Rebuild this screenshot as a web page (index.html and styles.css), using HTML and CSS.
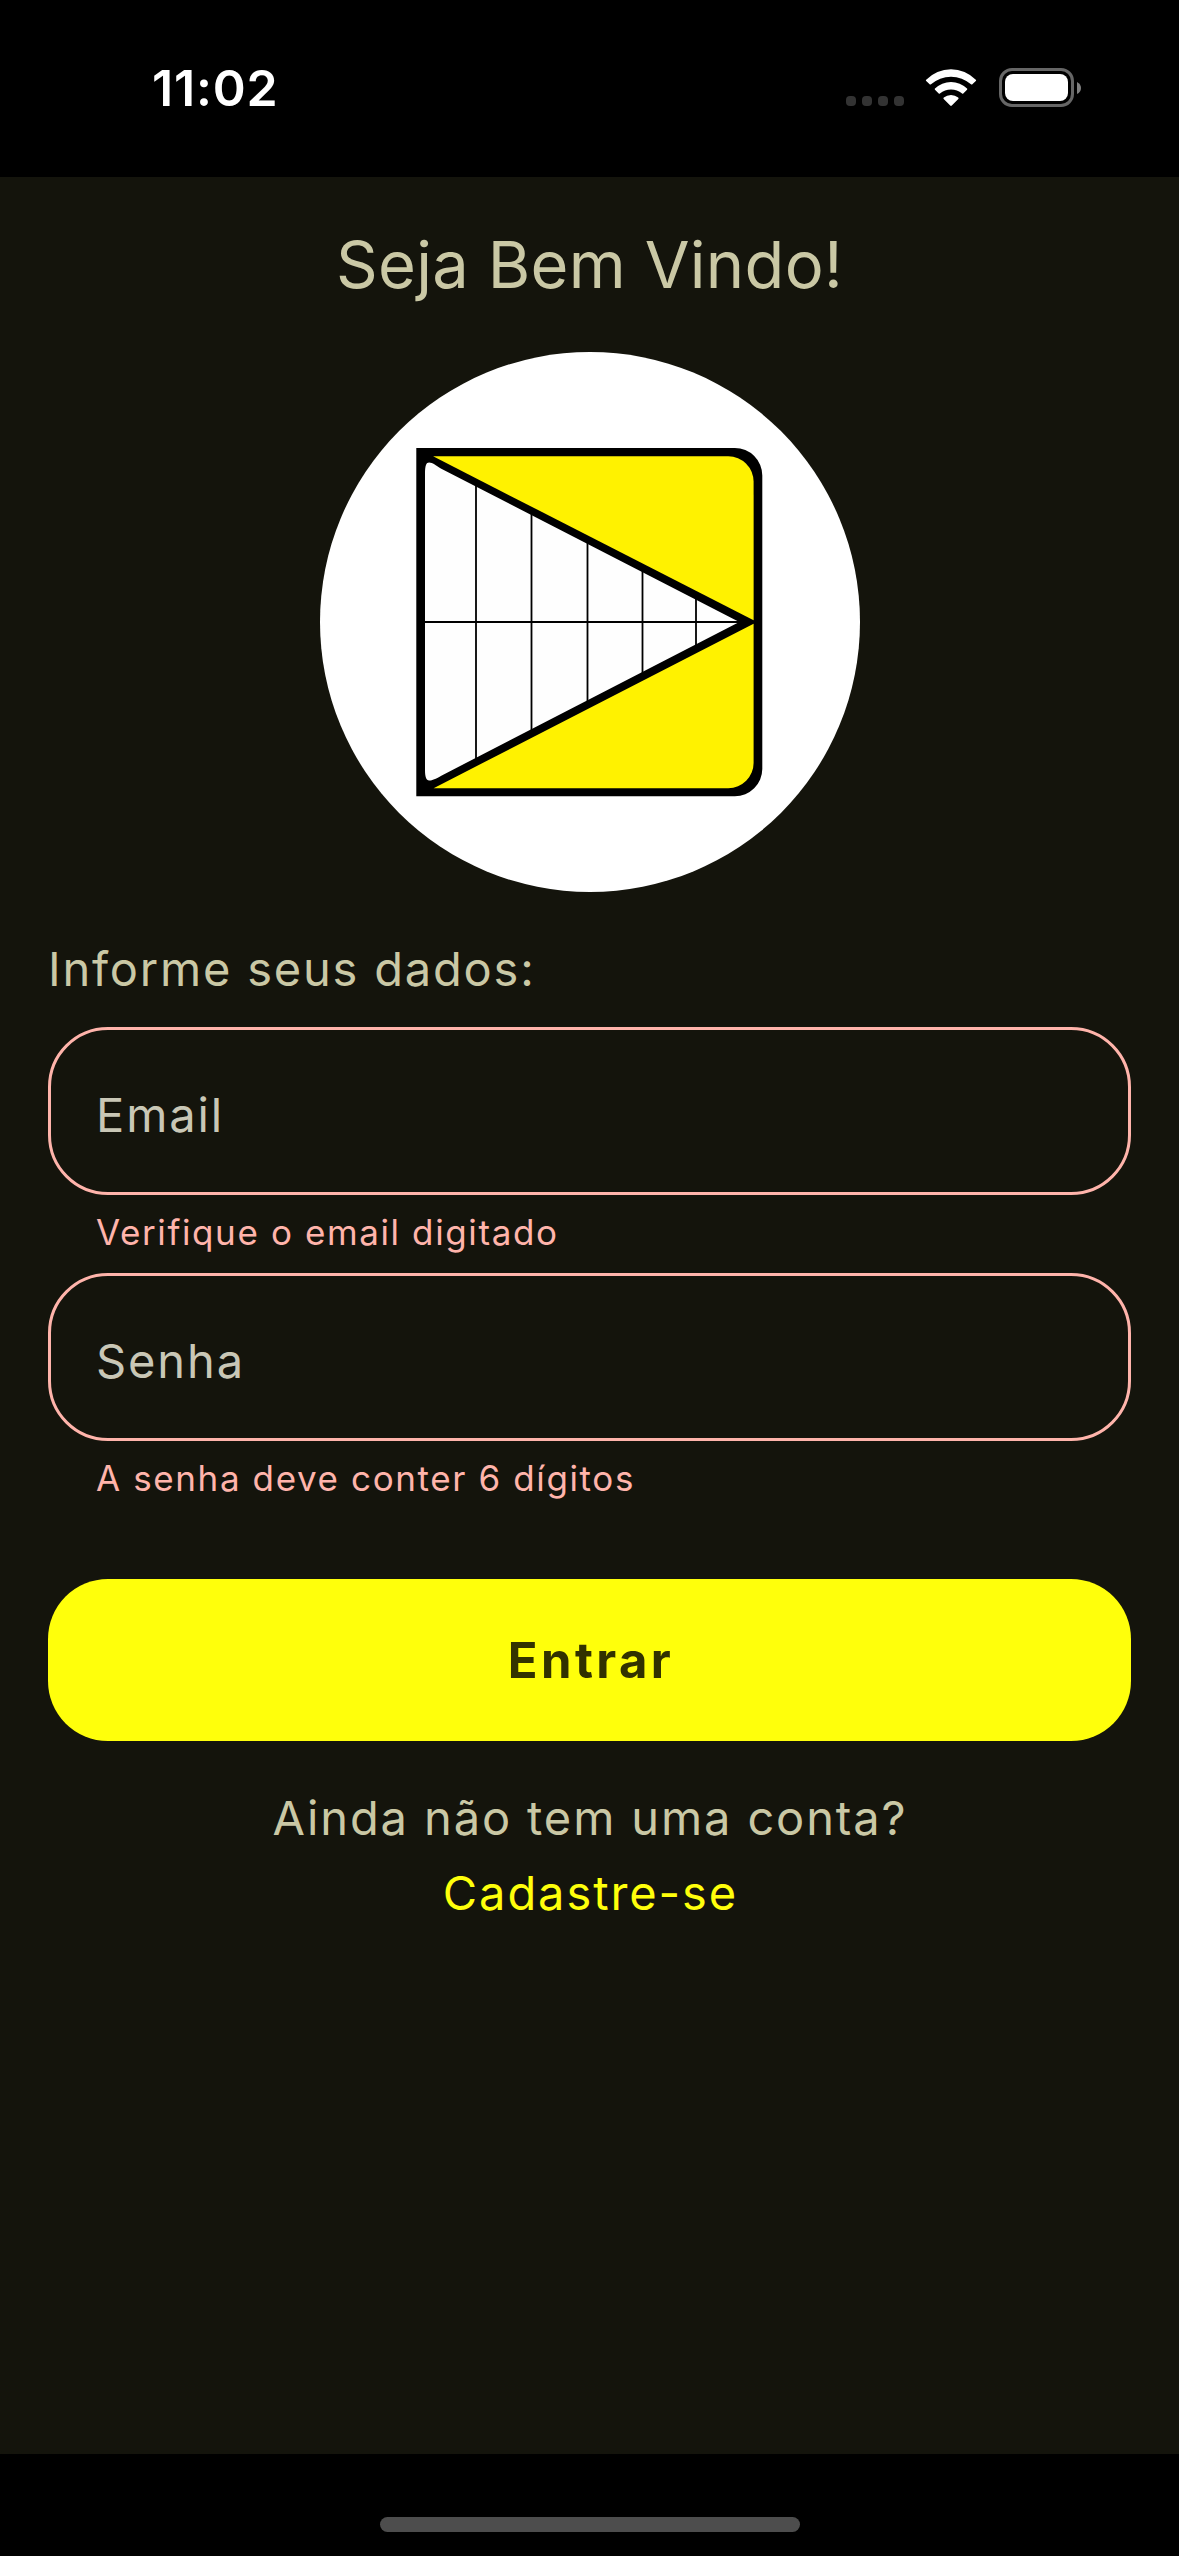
FILE: index.html
```html
<!DOCTYPE html>
<html lang="pt-BR">
<head>
  <meta charset="utf-8">
  <title>Entrar</title>
  <link rel="stylesheet" href="styles.css">
</head>
<body>
  <header class="status-bar">
    <span class="status-time">11:02</span>
    <div class="status-icons">
      <div class="signal"><i class="signal-dot"></i><i class="signal-dot"></i><i class="signal-dot"></i><i class="signal-dot"></i></div>
      <svg class="wifi" viewBox="0 0 52 39" aria-hidden="true">
        <path d="M1.2 11.8A34.5 34.5 0 0 1 50.8 11.8Q51.4 12.4 50.8 13L47.1 16.4Q46.6 16.8 46 16.3A30 30 0 0 0 6 16.3Q5.4 16.8 4.9 16.4L1.2 13Q.6 12.4 1.2 11.8Z"/>
        <path d="M10 20.6A22.6 22.6 0 0 1 42 20.6Q42.7 21.2 42 21.8L38.3 25.4Q37.7 26 37.1 25.5A17.5 17.5 0 0 0 14.9 25.5Q14.3 26 13.7 25.4L10 21.8Q9.3 21.2 10 20.6Z"/>
        <path d="M18.8 29.6A11 11 0 0 1 33.2 29.6Q34 30.3 33.3 31L26.8 37.6Q26 38.4 25.2 37.6L18.7 31Q18 30.3 18.8 29.6Z"/>
      </svg>
      <div class="battery">
        <div class="battery-case"><div class="battery-level"></div></div>
        <svg class="battery-tip" viewBox="0 0 4 12" aria-hidden="true"><path d="M0 0Q4 2 4 6Q4 10 0 12Z"/></svg>
      </div>
    </div>
  </header>

  <main class="screen">
    <h1 class="title">Seja Bem Vindo!</h1>
    <svg class="logo" viewBox="0 0 540 540" role="img" aria-label="Logo">
      <circle cx="270" cy="270" r="270" fill="#fff"/>
      <g transform="translate(-0.7 0)">
        <path d="M97 96H415.5A27.5 27.5 0 0 1 443 123.5V417A27.5 27.5 0 0 1 415.5 444.3H97Z" fill="#000"/>
        <path d="M113.8 104.3H409A25.3 25.3 0 0 1 434.3 129.6V268.3Z" fill="#fff200"/>
        <path d="M114.3 436.2H409A25.3 25.3 0 0 0 434.3 410.9V271.7Z" fill="#fff200"/>
        <path d="M105.7 122C105.7 113.5 107 110.6 109.8 110.6C113.5 110.6 116 113.4 122 116.7L420 270L122 423.7C116 427 113.5 428.4 109.8 428.4C107 428.4 105.7 425 105.7 418Z" fill="#fefefe"/>
        <path d="M156.7 132V408M212.2 160V380M268.2 190V351M323.2 218V322M376.7 246V295M105 270H422" fill="none" stroke="#000" stroke-width="1.8"/>
      </g>
    </svg>

    <form class="form">
      <p class="label">Informe seus dados:</p>
      <div class="field">Email</div>
      <p class="error">Verifique o email digitado</p>
      <div class="field">Senha</div>
      <p class="error">A senha deve conter 6 dígitos</p>
      <button class="submit" type="button">Entrar</button>
    </form>

    <p class="question">Ainda não tem uma conta?</p>
    <a class="signup">Cadastre-se</a>
  </main>

  <footer class="home-area"><div class="home-indicator"></div></footer>
</body>
</html>
```
FILE: styles.css
```css
* {
  box-sizing: border-box;
  margin: 0;
}

body {
  display: flex;
  flex-direction: column;
  width: 1179px;
  height: 2556px;
  background: #000;
  color: #cac8a5;
  font-family: Inter, "Liberation Sans", sans-serif;
  font-size: 47px;
  line-height: 72px;
}

.status-bar {
  display: flex;
  justify-content: space-between;
  height: 177px;
  padding: 68px 98px 0 152px;
}

.status-time {
  color: #fff;
  font-size: 50px;
  font-weight: 600;
  line-height: 40px;
  letter-spacing: 0.8px;
}

.status-icons {
  display: flex;
  height: 39px;
}

.signal {
  display: flex;
  align-items: flex-end;
  gap: 6px;
  margin-right: 21px;
  padding-bottom: 1px;
}

.signal-dot {
  width: 10px;
  height: 10px;
  border-radius: 4px;
  background: #333;
}

.wifi {
  width: 52px;
  height: 39px;
  margin-right: 22px;
  fill: #fff;
}

.battery {
  display: flex;
  align-items: center;
  gap: 3px;
}

.battery-case {
  width: 75px;
  height: 39px;
  padding: 3px;
  border: 3px solid #666;
  border-radius: 13px;
}

.battery-level {
  height: 27px;
  border-radius: 8px;
  background: #fff;
}

.battery-tip {
  width: 4px;
  height: 12px;
  fill: #808080;
}

.screen {
  display: flex;
  flex: 1;
  flex-direction: column;
  align-items: center;
  padding: 45px 48px 0;
  background: #14140c;
}

.title {
  font-size: 65px;
  font-weight: 400;
  line-height: 85px;
  letter-spacing: 0.32px;
}

.logo {
  width: 540px;
  height: 540px;
  margin: 45px 0 41px;
}

.form {
  align-self: stretch;
}

.label {
  margin-bottom: 22px;
  letter-spacing: 1.8px;
}

.field {
  display: flex;
  align-items: center;
  height: 168px;
  padding: 7px 45px 0;
  border: 3px solid #ffb4ab;
  border-radius: 60px;
  color: #c9c7b6;
  letter-spacing: 1.9px;
}

.error {
  margin: 13px 0 17px;
  padding-left: 48px;
  color: #ffb4ab;
  font-size: 35px;
  line-height: 48px;
  letter-spacing: 1.61px;
}

.submit {
  display: block;
  width: 100%;
  height: 162px;
  margin-top: 77px;
  padding: 2px 0 0 3px;
  border: 0;
  border-radius: 60px;
  background: #ffff0b;
  color: #323200;
  font: 700 49px/72px Inter, "Liberation Sans", sans-serif;
  letter-spacing: 3.4px;
}

.question {
  margin-top: 41px;
  padding-left: 1px;
  letter-spacing: 1.88px;
}

.signup {
  margin-top: 3px;
  padding-left: 2px;
  color: #ffff0b;
  letter-spacing: 1.92px;
}

.home-area {
  display: flex;
  justify-content: center;
  height: 102px;
  padding-top: 63px;
}

.home-indicator {
  width: 420px;
  height: 15px;
  border-radius: 8px;
  background: #4d4d4d;
}
```
